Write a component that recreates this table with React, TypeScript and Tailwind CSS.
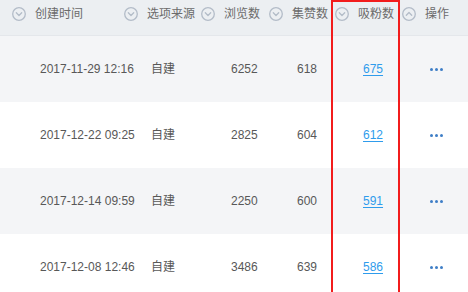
const font = { fontFamily: '"Liberation Sans", "Noto Sans CJK SC", sans-serif' };

const columns = [
  { label: "创建时间", width: "w-[112px]" },
  { label: "选项来源", width: "w-[77px]" },
  { label: "浏览数", width: "w-[68px]" },
  { label: "集赞数", width: "w-[66px]" },
  { label: "吸粉数", width: "w-[67px]" },
  { label: "操作", width: "w-[78px]", up: true },
];

const rows = [
  { time: "2017-11-29 12:16", source: "自建", views: 6252, likes: 618, fans: 675 },
  { time: "2017-12-22 09:25", source: "自建", views: 2825, likes: 604, fans: 612 },
  { time: "2017-12-14 09:59", source: "自建", views: 2250, likes: 600, fans: 591 },
  { time: "2017-12-08 12:46", source: "自建", views: 3486, likes: 639, fans: 586 },
];

const SortIcon = ({ up }: { up?: boolean }) => (
  <svg width="14" height="14" viewBox="0 0 14 14" fill="none" className="shrink-0">
    <circle cx="7" cy="7" r="6.3" stroke="#b3bcc8" strokeWidth="1.3" />
    <path
      d={up ? "M4.3 8.2 7 5.5l2.7 2.7" : "M4.3 5.8 7 8.5l2.7-2.7"}
      stroke="#b3bcc8"
      strokeWidth="1.3"
      strokeLinecap="round"
      strokeLinejoin="round"
    />
  </svg>
);

const App = () => {
  return (
    <div className="relative w-[468px] h-[292px] overflow-hidden bg-white text-[12px]" style={font}>
      <div className="flex h-[36px] bg-[#eceff2] border-b border-[#e4e7eb]">
        {columns.map((c) => (
          <div key={c.label} className={`${c.width} flex items-start pt-[7px] pl-3 gap-[9px] text-[#6b6b6b]`}>
            <SortIcon up={c.up} />
            <span className="leading-[14px] whitespace-nowrap">{c.label}</span>
          </div>
        ))}
      </div>
      {rows.map((r, i) => (
        <div
          key={r.time}
          className={`flex h-[66px] items-center text-[#585858] ${i % 2 === 0 ? "bg-[#f4f5f7]" : "bg-white"}`}
        >
          <div className="w-[112px] pl-10 whitespace-nowrap">{r.time}</div>
          <div className="w-[77px] pl-[39px]">{r.source}</div>
          <div className="w-[68px] pl-[42px]">{r.views}</div>
          <div className="w-[66px] pl-10">{r.likes}</div>
          <div className="w-[67px] pl-10">
            <a href="#" className="text-[#2f9cec] underline underline-offset-2">{r.fans}</a>
          </div>
          <div className="w-[78px] pl-10 flex gap-[2px]">
            <span className="w-[3px] h-[3px] rounded-full bg-[#3e7ec6]" />
            <span className="w-[3px] h-[3px] rounded-full bg-[#3e7ec6]" />
            <span className="w-[3px] h-[3px] rounded-full bg-[#3e7ec6]" />
          </div>
        </div>
      ))}
      <div className="absolute left-[331px] top-0 w-[69px] h-[310px] border-2 border-[#f21c1c]" />
    </div>
  );
};

export default App;
